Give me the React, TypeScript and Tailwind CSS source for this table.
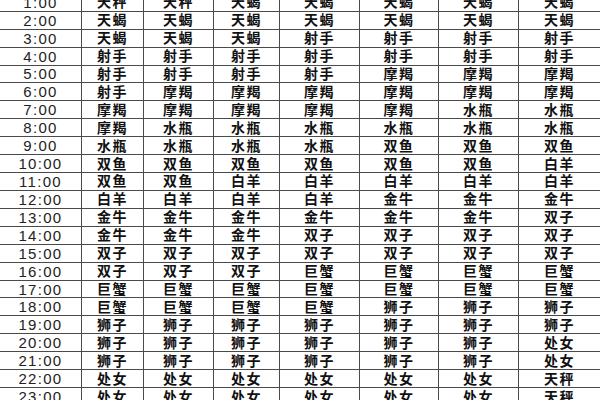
const rows: [string, string[]][] = [
  ['1:00', ['天秤', '天秤', '天蝎', '天蝎', '天蝎', '天蝎', '天蝎']],
  ['2:00', ['天蝎', '天蝎', '天蝎', '天蝎', '天蝎', '天蝎', '天蝎']],
  ['3:00', ['天蝎', '天蝎', '天蝎', '射手', '射手', '射手', '射手']],
  ['4:00', ['射手', '射手', '射手', '射手', '射手', '射手', '射手']],
  ['5:00', ['射手', '射手', '射手', '射手', '摩羯', '摩羯', '摩羯']],
  ['6:00', ['射手', '摩羯', '摩羯', '摩羯', '摩羯', '摩羯', '摩羯']],
  ['7:00', ['摩羯', '摩羯', '摩羯', '摩羯', '摩羯', '水瓶', '水瓶']],
  ['8:00', ['摩羯', '水瓶', '水瓶', '水瓶', '水瓶', '水瓶', '水瓶']],
  ['9:00', ['水瓶', '水瓶', '水瓶', '水瓶', '双鱼', '双鱼', '双鱼']],
  ['10:00', ['双鱼', '双鱼', '双鱼', '双鱼', '双鱼', '双鱼', '白羊']],
  ['11:00', ['双鱼', '双鱼', '白羊', '白羊', '白羊', '白羊', '白羊']],
  ['12:00', ['白羊', '白羊', '白羊', '白羊', '金牛', '金牛', '金牛']],
  ['13:00', ['金牛', '金牛', '金牛', '金牛', '金牛', '金牛', '双子']],
  ['14:00', ['金牛', '金牛', '金牛', '双子', '双子', '双子', '双子']],
  ['15:00', ['双子', '双子', '双子', '双子', '双子', '双子', '双子']],
  ['16:00', ['双子', '双子', '双子', '巨蟹', '巨蟹', '巨蟹', '巨蟹']],
  ['17:00', ['巨蟹', '巨蟹', '巨蟹', '巨蟹', '巨蟹', '巨蟹', '巨蟹']],
  ['18:00', ['巨蟹', '巨蟹', '巨蟹', '巨蟹', '狮子', '狮子', '狮子']],
  ['19:00', ['狮子', '狮子', '狮子', '狮子', '狮子', '狮子', '狮子']],
  ['20:00', ['狮子', '狮子', '狮子', '狮子', '狮子', '狮子', '处女']],
  ['21:00', ['狮子', '狮子', '狮子', '狮子', '狮子', '狮子', '处女']],
  ['22:00', ['处女', '处女', '处女', '处女', '处女', '处女', '天秤']],
  ['23:00', ['处女', '处女', '处女', '处女', '处女', '处女', '天秤']],
];

export default function App() {
  return (
    <div className="w-[600px] h-[400px] overflow-hidden bg-white">
      {/* table scrolled a little, first row is cut at the top */}
      <div className="mt-[-6.2px] grid grid-cols-[81px_62px_70px_66px_80px_79px_80px_82px] font-['Liberation_Sans','Noto_Sans_CJK_SC',sans-serif] text-[#111]">
        {rows.map(([time, signs]) => (
          <div key={time} className="contents">
            <div className="h-[17.93px] flex items-center justify-center border-b border-[#4a4a4a] text-[15px] font-normal tracking-[1.3px] text-[#222] leading-none">
              {time}
            </div>
            {signs.map((s, i) => (
              <div
                key={i}
                className="h-[17.93px] flex items-center justify-center border-b border-l border-[#4a4a4a] text-[14px] font-semibold tracking-[1.5px] leading-none"
              >
                {s}
              </div>
            ))}
          </div>
        ))}
      </div>
    </div>
  );
}
